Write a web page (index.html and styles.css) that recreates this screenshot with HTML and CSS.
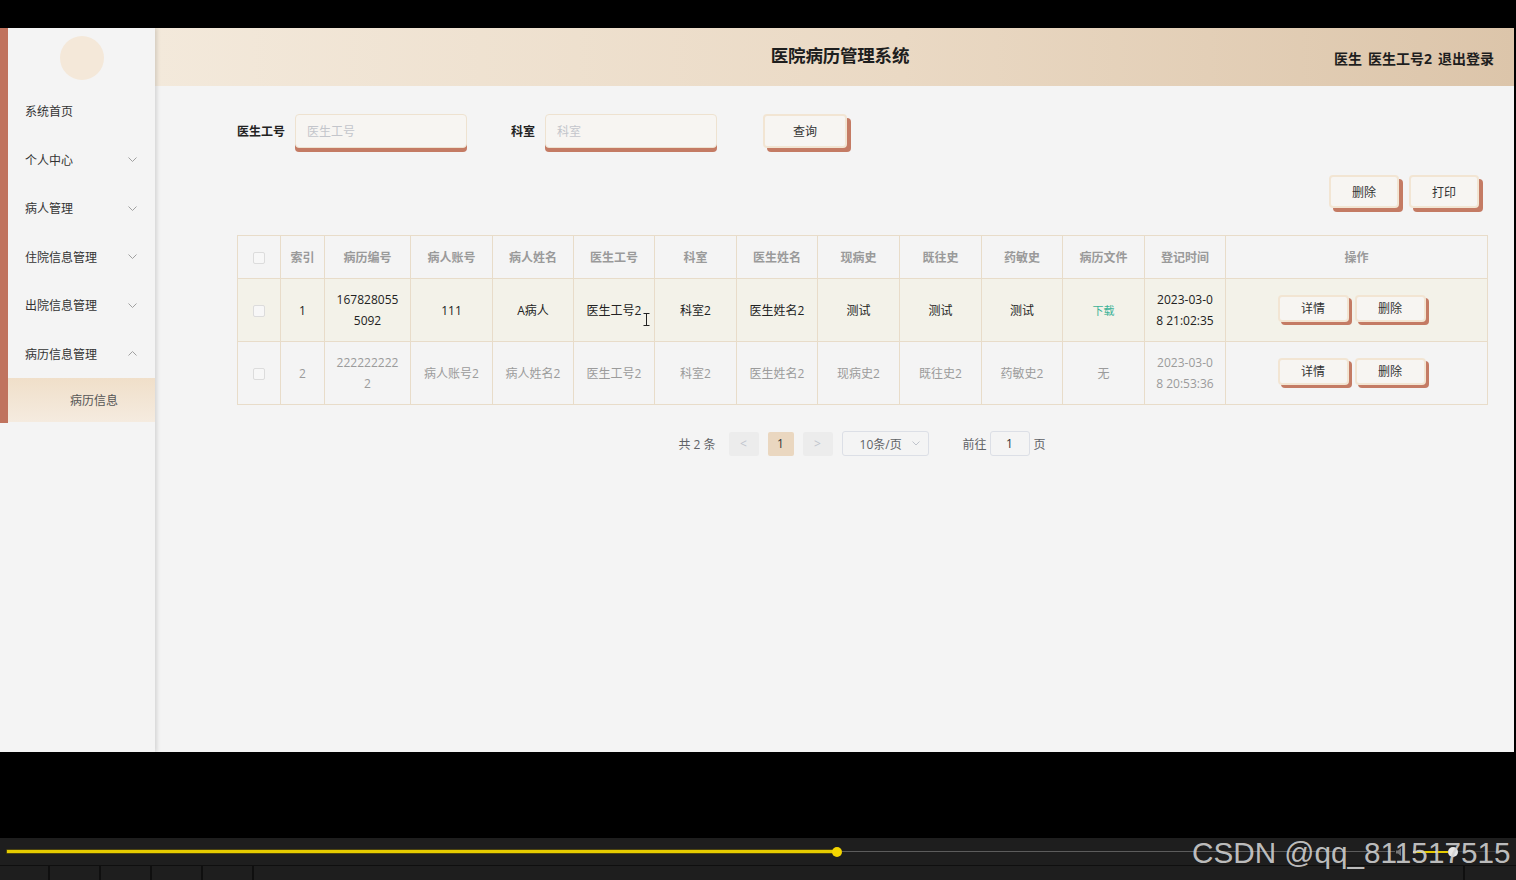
FILE: index.html
```html
<!DOCTYPE html>
<html lang="zh-CN">
<head>
<meta charset="utf-8">
<title>医院病历管理系统</title>
<link rel="stylesheet" href="styles.css">
</head>
<body>
<div class="topbar"></div>
<div class="app">
  <aside class="sidebar">
    <div class="side-inner">
      <div class="avatar-wrap"><div class="avatar"></div></div>
      <ul class="menu">
        <li class="menu-item"><span>系统首页</span></li>
        <li class="menu-item"><span>个人中心</span><svg class="chev" width="9" height="5" viewBox="0 0 9 5"><polyline points="0.5,0.5 4.5,4.5 8.5,0.5"/></svg></li>
        <li class="menu-item"><span>病人管理</span><svg class="chev" width="9" height="5" viewBox="0 0 9 5"><polyline points="0.5,0.5 4.5,4.5 8.5,0.5"/></svg></li>
        <li class="menu-item"><span>住院信息管理</span><svg class="chev" width="9" height="5" viewBox="0 0 9 5"><polyline points="0.5,0.5 4.5,4.5 8.5,0.5"/></svg></li>
        <li class="menu-item"><span>出院信息管理</span><svg class="chev" width="9" height="5" viewBox="0 0 9 5"><polyline points="0.5,0.5 4.5,4.5 8.5,0.5"/></svg></li>
        <li class="menu-item"><span>病历信息管理</span><svg class="chev" width="9" height="5" viewBox="0 0 9 5"><polyline points="0.5,4.5 4.5,0.5 8.5,4.5"/></svg></li>
      </ul>
      <div class="sub-item">病历信息</div>
    </div>
  </aside>
  <div class="main-col">
    <header class="header">
      <div></div>
      <h1 class="title">医院病历管理系统</h1>
      <div class="user"><span>医生</span><span>医生工号2</span><span>退出登录</span></div>
    </header>
    <main class="content">
      <div class="search">
        <label class="field-label">医生工号</label>
        <div class="input"><span class="ph">医生工号</span></div>
        <label class="field-label second">科室</label>
        <div class="input"><span class="ph">科室</span></div>
        <button class="btn query">查询</button>
      </div>
      <div class="toolbar">
        <button class="btn tool">删除</button>
        <button class="btn tool">打印</button>
      </div>
      <table class="grid">
        <colgroup>
          <col style="width:43px"><col style="width:44px"><col style="width:86px"><col style="width:82px"><col style="width:81px"><col style="width:81px"><col style="width:82px"><col style="width:81px"><col style="width:82px"><col style="width:82px"><col style="width:81px"><col style="width:82px"><col style="width:81px"><col style="width:262px">
        </colgroup>
        <thead>
          <tr>
            <th class="narrow"><span class="check"></span></th>
            <th class="narrow">索引</th><th>病历编号</th><th>病人账号</th><th>病人姓名</th><th>医生工号</th><th>科室</th><th>医生姓名</th><th>现病史</th><th>既往史</th><th>药敏史</th><th>病历文件</th><th>登记时间</th><th>操作</th>
          </tr>
        </thead>
        <tbody>
          <tr class="row hover">
            <td class="narrow"><span class="check"></span></td>
            <td class="narrow">1</td><td>1678280555092</td><td>111</td><td>A病人</td>
            <td class="cursor-cell">医生工号2<svg class="ibeam" width="7" height="13" viewBox="0 0 7 13"><path d="M0.5 0.5h6M3.5 0.5v12M0.5 12.5h6"/></svg></td>
            <td>科室2</td><td>医生姓名2</td><td>测试</td><td>测试</td><td>测试</td>
            <td><span class="link">下载</span></td>
            <td>2023-03-08 21:02:35</td>
            <td><div class="ops"><button class="btn op">详情</button><button class="btn op">删除</button></div></td>
          </tr>
          <tr class="row muted">
            <td class="narrow"><span class="check"></span></td>
            <td class="narrow">2</td><td>2222222222</td><td>病人账号2</td><td>病人姓名2</td><td>医生工号2</td><td>科室2</td><td>医生姓名2</td><td>现病史2</td><td>既往史2</td><td>药敏史2</td><td>无</td>
            <td>2023-03-08 20:53:36</td>
            <td><div class="ops"><button class="btn op">详情</button><button class="btn op">删除</button></div></td>
          </tr>
        </tbody>
      </table>
      <div class="pager">
        <span class="total">共 2 条</span>
        <span class="pbtn">&lt;</span>
        <span class="pnum">1</span>
        <span class="pbtn">&gt;</span>
        <span class="psize">10条/页<svg class="schev" width="8" height="5" viewBox="0 0 8 5"><polyline points="0.5,0.5 4,4 7.5,0.5"/></svg></span>
        <span class="goto">前往</span>
        <span class="pinput">1</span>
        <span class="page">页</span>
      </div>
    </main>
  </div>
</div>
<div class="black-gap"></div>
<div class="player">
  <div class="played"></div>
  <div class="knob"></div>
  <div class="rest"></div>
  <svg class="speaker" width="10" height="10" viewBox="0 0 10 10"><path d="M1 3.5h2l3-2.5v8l-3-2.5h-2z" fill="#777"/></svg>
  <div class="vol"></div>
  <div class="vol-knob"></div>
  <div class="vol-rest"></div>
  <div class="watermark">CSDN @qq_811517515</div>
</div>
<div class="player-foot">
  <span class="seg"></span><span class="seg"></span><span class="seg"></span><span class="seg"></span><span class="seg"></span><span class="seg long"></span><span class="seg last"></span>
</div>
</body>
</html>
```

FILE: styles.css
```css
* { box-sizing: border-box; margin: 0; padding: 0; }
html, body { background: #000; }
body {
  width: 1516px;
  height: 880px;
  overflow: hidden;
  font-family: "Open Sans", "Noto Sans CJK SC", sans-serif;
  font-size: 12px;
  color: #333;
}
ul { list-style: none; }
button { font-family: inherit; font-size: 12px; color: #333; cursor: pointer; }

.topbar { height: 28px; }

.app {
  display: flex;
  width: 1514px;
  height: 724px;
  background: #f4f4f4;
}

/* sidebar */
.sidebar {
  width: 155px;
  flex: none;
  background: #f4f4f4;
  box-shadow: 2px 0 4px rgba(0, 0, 0, 0.13);
  position: relative;
  z-index: 1;
}
.side-inner {
  border-left: 8px solid #c0735e;
  padding-bottom: 1px;
}
.avatar-wrap {
  height: 59px;
  display: flex;
  align-items: center;
  justify-content: center;
}
.avatar {
  width: 44px;
  height: 44px;
  border-radius: 50%;
  background: #f4e8d9;
}
.menu-item {
  height: 48.5px;
  display: flex;
  align-items: center;
  justify-content: space-between;
  padding: 0 18px 0 17px;
  font-size: 12px;
  color: #333;
}
.chev { fill: none; stroke: #a0a0a0; stroke-width: 1; }
.sub-item {
  height: 44px;
  display: flex;
  align-items: center;
  padding-left: 62px;
  color: #555;
  background: linear-gradient(180deg, #f0dfc9 0%, #f5ebdf 100%);
}

/* main */
.main-col {
  flex: 1;
  display: flex;
  flex-direction: column;
  min-width: 0;
}
.header {
  height: 58px;
  flex: none;
  display: grid;
  grid-template-columns: 1fr auto 1fr;
  align-items: center;
  background: linear-gradient(90deg, #f3e9db 0%, #ead9c4 55%, #dcc5aa 100%);
}
.title {
  font-family: "Noto Sans CJK SC", sans-serif;
  font-size: 17.5px;
  line-height: 24px;
  font-weight: 700;
  color: #1e1e1e;
  padding: 0 0 4px 11px;
  letter-spacing: -0.2px;
}
.user {
  justify-self: end;
  display: flex;
  gap: 6px;
  padding: 4px 20px 0 0;
  font-size: 14px;
  line-height: 20px;
  font-weight: 700;
  color: #1e1e1e;
}

.content {
  flex: 1;
  padding: 28px 27px 0 82px;
}

.search {
  display: flex;
  align-items: center;
  height: 34px;
}
.field-label {
  font-weight: 700;
  font-size: 12px;
  color: #222;
  margin-right: 10px;
}
.field-label.second { margin-left: 44px; }
.input {
  width: 172px;
  height: 34px;
  background: #f7f5f2;
  border: 1px solid #eee2d0;
  border-radius: 4px;
  box-shadow: 0 4px 0 #c47b64;
  display: flex;
  align-items: center;
  padding-left: 11px;
}
.ph { color: #c3c5cb; font-size: 12px; }

.btn {
  background: #f7f5f2;
  border: 2px solid #f2e5d3;
  border-radius: 4px;
}
.query {
  width: 84px;
  height: 34px;
  margin-left: 46px;
  box-shadow: 4px 4px 0 #c47b64;
}
.toolbar {
  display: flex;
  justify-content: flex-end;
  gap: 10px;
  padding-right: 8px;
  margin-top: 27px;
}
.tool {
  width: 70px;
  height: 33px;
  box-shadow: 4px 4px 0 #c47b64;
}

/* table */
.grid {
  width: 1250px;
  margin-top: 27px;
  border-collapse: collapse;
  table-layout: fixed;
  border: 1px solid #e6dccb;
}
.grid th, .grid td {
  border: 1px solid #e8dcc9;
  text-align: center;
  vertical-align: middle;
  padding: 0 10px;
  font-size: 12px;
  line-height: 21px;
  word-break: break-all;
}
.grid .narrow { padding: 0; }
.grid th {
  height: 43px;
  color: #9a9a9a;
  font-weight: 700;
  background: #f4f4f4;
}
.grid td { height: 63px; }
.row.hover td { background: #f3f2e9; color: #222; }
.row.muted td { background: #f4f4f4; color: #9b9b9b; height: 63px; }
.check {
  display: inline-block;
  width: 12px;
  height: 12px;
  border: 1px solid #dcdcdc;
  border-radius: 2px;
  background: #f7f7f7;
  vertical-align: middle;
}
.link { color: #3db398; font-size: 11px; }
.cursor-cell { position: relative; }
.ibeam {
  position: absolute;
  left: 69px;
  top: 34px;
  fill: none;
  stroke: #222;
  stroke-width: 1;
}
.ops {
  display: flex;
  justify-content: center;
  gap: 6px;
  padding: 0 10px 4px 0;
}
.op {
  width: 71px;
  height: 27px;
  box-shadow: 3px 3px 0 #c47b64;
}

/* pager */
.pager {
  display: flex;
  align-items: center;
  justify-content: center;
  margin-top: 26px;
  height: 25px;
  color: #606266;
  font-size: 12px;
}
.total { margin-right: 13px; }
.pbtn, .pnum {
  height: 24px;
  display: flex;
  align-items: center;
  justify-content: center;
  border-radius: 2px;
  margin-right: 9px;
}
.pbtn { width: 30px; background: #ececec; color: #c0c4cc; }
.pnum { width: 26px; background: #ead7c0; color: #333; }
.psize {
  width: 87px;
  height: 25px;
  border: 1px solid #dcdfe6;
  border-radius: 3px;
  display: flex;
  align-items: center;
  justify-content: space-between;
  padding: 0 8px 0 17px;
  margin-right: 34px;
}
.schev { fill: none; stroke: #c0c4cc; stroke-width: 1; }
.goto { margin-right: 3px; }
.pinput {
  width: 40px;
  height: 25px;
  border: 1px solid #dcdfe6;
  border-radius: 3px;
  display: flex;
  align-items: center;
  justify-content: center;
  margin-right: 4px;
  color: #333;
}

/* video player */
.black-gap { height: 86px; }
.player {
  height: 27px;
  background: #1e1e1e;
  display: flex;
  align-items: center;
  padding-left: 7px;
  position: relative;
}
.played {
  width: 830px;
  height: 3px;
  background: #e5cb00;
  box-shadow: 0 0 0 0.5px #7a6a00;
}
.knob {
  width: 10px;
  height: 10px;
  border-radius: 50%;
  background: #f3d500;
  margin-left: -5px;
}
.rest {
  width: 553px;
  height: 1px;
  background: #5c5c5c;
}
.speaker { margin: 0 8px 0 0; }
.vol { width: 35px; height: 2px; background: #e5cb00; }
.vol-knob { width: 10px; height: 10px; border-radius: 50%; background: #e8e8e8; }
.vol-rest { width: 50px; height: 1px; background: #3a3a3a; }
.watermark {
  position: absolute;
  left: 1192px;
  top: 0;
  font-family: "Liberation Sans", Arial, sans-serif;
  font-size: 29.7px;
  line-height: 29px;
  color: rgba(210, 210, 210, 0.9);
  white-space: nowrap;
}
.player-foot {
  height: 15px;
  background: #1e1e1e;
  border-top: 1px solid #0f0f0f;
  display: flex;
}
.seg { width: 51px; border-right: 2px solid #0f0f0f; }
.seg:first-child { width: 50px; }
.seg.long { width: 1211px; }
.seg.last { flex: 1; border-right: none; }
```
